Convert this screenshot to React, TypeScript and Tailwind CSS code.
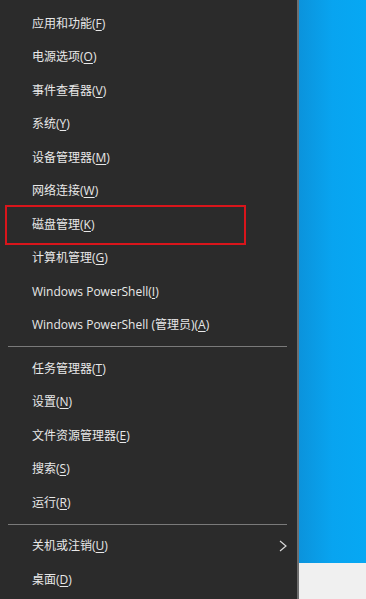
import React from "react";

type Item = { label: string; key: string; suffix?: string; arrow?: boolean; highlight?: boolean };

const group1: Item[] = [
  { label: "应用和功能", key: "F" },
  { label: "电源选项", key: "O" },
  { label: "事件查看器", key: "V" },
  { label: "系统", key: "Y" },
  { label: "设备管理器", key: "M" },
  { label: "网络连接", key: "W" },
  { label: "磁盘管理", key: "K", highlight: true },
  { label: "计算机管理", key: "G" },
  { label: "Windows PowerShell", key: "I" },
  { label: "Windows PowerShell (管理员)", key: "A" },
];
const group2: Item[] = [
  { label: "任务管理器", key: "T" },
  { label: "设置", key: "N" },
  { label: "文件资源管理器", key: "E" },
  { label: "搜索", key: "S" },
  { label: "运行", key: "R" },
];
const group3: Item[] = [
  { label: "关机或注销", key: "U", arrow: true },
  { label: "桌面", key: "D" },
];

function Row({ item }: { item: Item }) {
  return (
    <div className="relative flex h-[33.5px] items-center pl-[32px] pr-[10px] pt-[2px]">
      {item.highlight && (
        <div className="absolute left-[5px] top-[-2px] h-[40px] w-[241px] border-2 border-[#d9151b]" />
      )}
      <span className="whitespace-nowrap text-[12px] text-[#e8e8e8]">
        {item.label}(<span className="underline underline-offset-2">{item.key}</span>)
      </span>
      {item.arrow && (
        <svg className="absolute left-[278px] top-[11px]" width="10" height="12" viewBox="0 0 10 12">
          <path d="M2 1 L8 6 L2 11" fill="none" stroke="#d8d8d8" strokeWidth="1.2" />
        </svg>
      )}
    </div>
  );
}

function Sep() {
  return <div className="mx-[8px] mt-[5px] mb-[4px] h-px w-[279px] bg-[#7a7a7a]" />;
}

export default function App() {
  return (
    <div
      className="flex h-[599px] w-[366px] overflow-hidden"
      style={{ fontFamily: '"Open Sans", "Noto Sans CJK SC", sans-serif' }}
    >
      <div className="flex w-[297px] shrink-0 flex-col bg-[#2b2b2b] pt-[6px]">
        {group1.map((it) => (
          <Row key={it.key} item={it} />
        ))}
        <Sep />
        {group2.map((it) => (
          <Row key={it.key} item={it} />
        ))}
        <Sep />
        {group3.map((it) => (
          <Row key={it.key} item={it} />
        ))}
      </div>
      <div className="w-[2px] shrink-0 bg-[#6e6e6e]" />
      <div className="flex flex-1 flex-col">
        <div className="flex-1 bg-gradient-to-r from-[#0b93dc] via-[#08a4f0] to-[#06a8f3]" />
        <div className="h-[36px] bg-[#f0f0f0]" />
      </div>
    </div>
  );
}
